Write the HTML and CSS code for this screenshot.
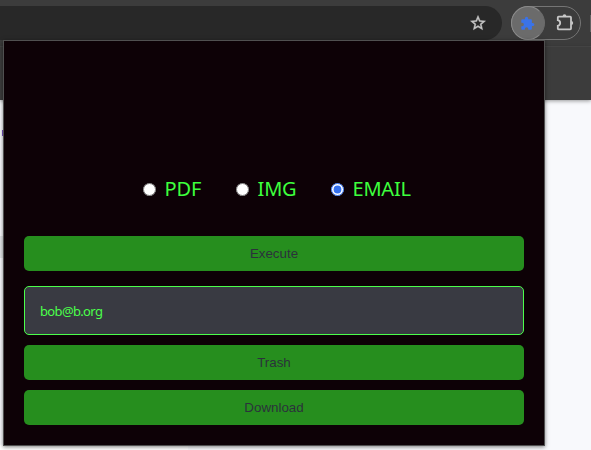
FILE: index.html
```html
<!DOCTYPE html>
<html lang="en">
<head>
<meta charset="utf-8">
<title>Extension</title>
<link rel="stylesheet" href="styles.css">
</head>
<body>
<div class="browser">
  <header class="toolbar">
    <div class="address">
      <svg class="star" viewBox="0 0 24 24"><path d="M22 9.24l-7.19-.62L12 2 9.19 8.63 2 9.24l5.46 4.73L5.82 21 12 17.27 18.18 21l-1.63-7.03L22 9.24zM12 15.4l-3.76 2.27 1-4.28-3.32-2.88 4.38-.38L12 6.1l1.71 4.04 4.38.38-3.32 2.88 1 4.28L12 15.4z"/></svg>
    </div>
    <div class="extensions">
      <span class="active"><svg class="puzzle" viewBox="0 0 24 24"><path d="M20.5 11H19V7c0-1.1-.9-2-2-2h-4V3.5a2.5 2.5 0 0 0-5 0V5H4c-1.1 0-2 .9-2 2v3.8h1.5a2.7 2.7 0 0 1 0 5.4H2V20c0 1.1.9 2 2 2h3.800v-1.500a2.700 2.700 0 0 1 5.400 0V22H17c1.100 0 2-.9 2-2v-4h1.500a2.500 2.500 0 0 0 0-5z"/></svg></span>
      <svg class="outline" viewBox="0 0 18 18"><path class="line" d="M2.800 3.700h11.400q.8 0 .8.800v11q0 .8-.8.800H2.600q-.8 0-.8-.8v-2.700q2.400-.6 2.400-2.800T1.800 7.200V4.500q0-.8.8-.8z"/><path class="knob" d="M6.600 3.500a1.900 2.200 0 0 1 3.800 0zM15.200 8a2 2 0 0 1 0 4z"/></svg>
    </div>
    <span class="divider"></span>
  </header>
  <div class="banner"></div>
  <main class="page"><i class="mark"></i><i class="row"></i><i class="strip"></i></main>
</div>
<form class="popup">
  <div class="choices">
    <label><input type="radio" name="kind">PDF</label>
    <label><input type="radio" name="kind">IMG</label>
    <label class="last"><input type="radio" name="kind" checked>EMAIL</label>
  </div>
  <button type="button" class="execute">Execute</button>
  <input class="email" type="text" value="bob@b.org">
  <button type="button">Trash</button>
  <button type="button">Download</button>
</form>
</body>
</html>
```
FILE: styles.css
```css
* { box-sizing: border-box; }
body { margin: 0; width: 591px; height: 450px; overflow: hidden; position: relative; background: #f8f9fc; }
.browser { height: 450px; display: flex; flex-direction: column; }
.toolbar { height: 47px; flex: none; display: flex; align-items: flex-start; padding-top: 6px; background: #3c3c3c; border-bottom: 1px solid #4a4a4a; }
.address { width: 502px; height: 34px; flex: none; display: flex; align-items: center; justify-content: flex-end; padding-right: 15px; background: #282828; border-radius: 0 17px 17px 0; }
.star { width: 18px; height: 18px; fill: #c7c7c7; stroke: #c7c7c7; stroke-width: .6; }
.extensions { width: 70px; height: 34px; flex: none; margin-left: 9px; display: flex; align-items: center; border: 1px solid #757575; border-radius: 17px; }
.active { width: 34px; height: 34px; flex: none; margin-left: -1px; display: flex; align-items: center; justify-content: center; background: #6b6b6b; border: 1px solid #8a8a8a; border-right-color: #6b6b6b; border-radius: 50%; }
.puzzle { width: 15px; height: 15px; margin-left: -2px; fill: #3b73e7; }
.outline { width: 18px; height: 18px; margin: -3px 0 0 11px; }
.line { fill: none; stroke: #c7c7c7; stroke-width: 1.8; }
.knob { fill: #c7c7c7; }
.divider { width: 1px; height: 17px; margin: 9px 0 0 9px; background: #626262; }
.banner { height: 53px; flex: none; background: #3c3c3c; box-shadow: 0 1px 4px rgba(0, 0, 0, .4); }
.page { flex: 1; display: flex; flex-direction: column; }
.mark { width: 3px; height: 6px; margin-top: 30px; border-right: 1px solid #7955c4; }
.row { width: 3px; height: 22px; margin-top: 100px; background: #e3e5e8; }
.strip { width: 188px; height: 5px; margin-top: auto; background: #fff; }
.popup { position: absolute; left: 3px; top: 40px; width: 542px; height: 406px; padding: 0 20px; display: flex; flex-direction: column; background: #0d0106; border: 1px solid #505050; box-shadow: 0 1px 4px rgba(0, 0, 0, .5); }
.choices { display: flex; padding-left: 119px; margin-top: 134px; height: 27px; }
label { width: 93px; display: flex; align-items: center; font: 20px/27px "Noto Sans", sans-serif; letter-spacing: -.15px; color: #3dff3d; }
label.last { margin-left: 2px; letter-spacing: -.2px; }
label input { width: 13px; height: 13px; margin: 1px 8.5px 0 0; accent-color: #3470ee; }
button { height: 35px; flex: none; margin: 0 0 10px; padding: 0; border: 0; border-radius: 5px; background: #268e1e; color: #2b323b; font: 13.333px "Liberation Sans", Arial, sans-serif; }
.execute { margin: 34px 0 15px; }
.email { height: 49px; flex: none; margin: 0 0 10px; padding: 0 15px; border: 1px solid #4bff4b; border-radius: 5px; background: #393a42; color: #4bff4b; font: 13px "Noto Sans", sans-serif; letter-spacing: -.65px; }
```
